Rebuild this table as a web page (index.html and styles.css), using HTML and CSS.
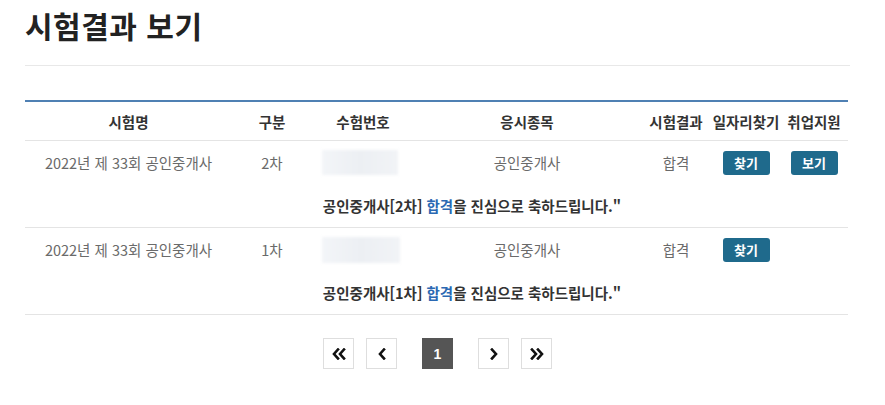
FILE: index.html
```html
<!DOCTYPE html>
<html lang="ko">
<head>
<meta charset="utf-8">
<link rel="stylesheet" href="styles.css">
</head>
<body>
<div class="page">
  <h1 class="title">시험결과 보기</h1>
  <hr class="divider">
  <table class="result">
    <colgroup>
      <col class="c1"><col class="c2"><col class="c3"><col class="c4"><col class="c5"><col class="c6"><col class="c7">
    </colgroup>
    <thead>
      <tr><th>시험명</th><th>구분</th><th>수험번호</th><th>응시종목</th><th>시험결과</th><th>일자리찾기</th><th>취업지원</th></tr>
    </thead>
    <tbody>
      <tr class="data">
        <td>2022년 제 33회 공인중개사</td><td>2차</td><td><div class="masked"></div></td><td>공인중개사</td><td>합격</td>
        <td><button class="btn">찾기</button></td><td><button class="btn">보기</button></td>
      </tr>
      <tr class="msg">
        <td></td><td colspan="4">공인중개사[2차] <span class="pass">합격</span>을 진심으로 축하드립니다."</td><td></td><td></td>
      </tr>
      <tr class="data">
        <td>2022년 제 33회 공인중개사</td><td>1차</td><td><div class="masked wide"></div></td><td>공인중개사</td><td>합격</td>
        <td><button class="btn">찾기</button></td><td></td>
      </tr>
      <tr class="msg">
        <td></td><td colspan="4">공인중개사[1차] <span class="pass">합격</span>을 진심으로 축하드립니다."</td><td></td><td></td>
      </tr>
    </tbody>
  </table>
  <nav class="pager">
    <a class="pg"><svg width="14" height="12" viewBox="0 0 14 12"><polyline points="6,1.5 2,6 6,10.5" /><polyline points="12,1.5 8,6 12,10.5" /></svg></a>
    <a class="pg"><svg width="10" height="12" viewBox="0 0 10 12"><polyline points="7,1.5 3,6 7,10.5" /></svg></a>
    <a class="pg current">1</a>
    <a class="pg"><svg width="10" height="12" viewBox="0 0 10 12"><polyline points="3,1.5 7,6 3,10.5" /></svg></a>
    <a class="pg"><svg width="14" height="12" viewBox="0 0 14 12"><polyline points="2,1.5 6,6 2,10.5" /><polyline points="8,1.5 12,6 8,10.5" /></svg></a>
  </nav>
</div>
</body>
</html>
```
FILE: styles.css
```css
html, body { margin: 0; padding: 0; background: #fff; }
body { font-family: "Noto Sans CJK KR", "Noto Sans", sans-serif; color: #333; }
.page { width: 825px; padding: 0 0 0 25px; }
.title { margin: 0; padding-top: 5px; font-size: 30px; line-height: 40px; font-weight: 700; color: #222; letter-spacing: 0.5px; }
.divider { margin: 20px 0 0 0; border: 0; border-top: 1px solid #e8e8e8; height: 0; }
.result { margin-top: 34px; width: 823px; border-collapse: collapse; table-layout: fixed; border-top: 2px solid #4f80b3; }
.c1 { width: 207px; } .c2 { width: 80px; } .c3 { width: 102px; } .c4 { width: 226px; }
.c5 { width: 72px; } .c6 { width: 68px; } .c7 { width: 68px; }
.result th { height: 38px; font-size: 14.5px; font-weight: 700; color: #333; text-align: center; border-bottom: 1px solid #e4e4e4; padding: 0; white-space: nowrap; }
.result td { text-align: center; padding: 0; font-size: 14.5px; color: #6a6a6a; white-space: nowrap; }
.data td { height: 43px; }
.msg td { height: 43px; border-bottom: 1px solid #e4e4e4; font-weight: 700; color: #333; font-size: 14.5px; }
.pass { color: #2b69b3; }
.masked { width: 76px; height: 25px; margin: 0 0 0 10px; background: linear-gradient(90deg, #f3f5f8, #eceff3 50%, #f1f3f6); filter: blur(1.5px); }
.masked.wide { width: 78px; height: 26px; }
.btn { width: 47px; height: 24px; border: 0; border-radius: 3px; background: #1f6a8c; color: #fff; font-family: inherit; font-weight: 700; font-size: 13px; padding: 0; line-height: 24px; }
.pager { display: flex; justify-content: center; align-items: center; gap: 12px; margin-top: 23px; }
.pg { width: 29px; height: 29px; border: 1px solid #dedede; display: flex; align-items: center; justify-content: center; }
.pg svg polyline { fill: none; stroke: #111; stroke-width: 2.6; stroke-linecap: square; }
.pg.current { margin: 0 13px; background: #555; border-color: #555; color: #fff; font-weight: 700; font-size: 14px; font-family: "Liberation Sans", sans-serif; }
```
